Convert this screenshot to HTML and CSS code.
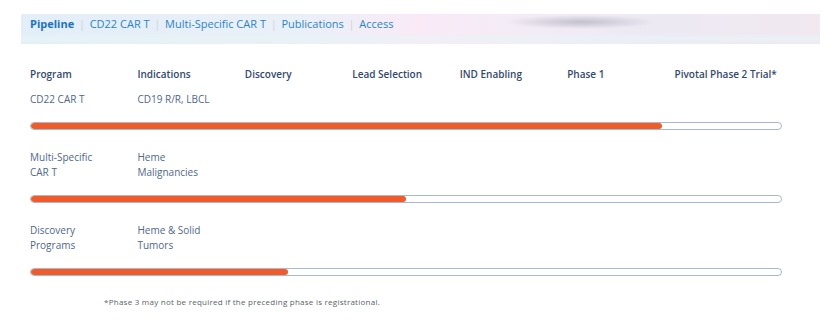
FILE: index.html
```html
<html>
<head>
	<link rel="stylesheet" href="styles.css">
</head>
<body>
	<nav class="tabs">
		<a class="active">Pipeline</a>
		<span class="sep">|</span>
		<a>CD22 CAR T</a>
		<span class="sep">|</span>
		<a>Multi-Specific CAR T</a>
		<span class="sep">|</span>
		<a>Publications</a>
		<span class="sep">|</span>
		<a>Access</a>
	</nav>

	<div class="pipeline">
		<div class="row head">
			<div>Program</div>
			<div>Indications</div>
			<div>Discovery</div>
			<div>Lead Selection</div>
			<div>IND Enabling</div>
			<div>Phase 1</div>
			<div>Pivotal Phase 2 Trial*</div>
		</div>

		<div class="row">
			<div>CD22 CAR T</div>
			<div>CD19 R/R, LBCL</div>
		</div>
		<div class="bar"><div class="fill" style="width:84.2%"></div></div>

		<div class="row">
			<div>Multi-Specific<br>CAR T</div>
			<div>Heme<br>Malignancies</div>
		</div>
		<div class="bar"><div class="fill" style="width:50%"></div></div>

		<div class="row">
			<div>Discovery<br>Programs</div>
			<div>Heme &amp; Solid<br>Tumors</div>
		</div>
		<div class="bar"><div class="fill" style="width:34.3%"></div></div>

		<p class="note">*Phase 3 may not be required if the preceding phase is registrational.</p>
	</div>
</body>
</html>
```

FILE: styles.css
```css
body {
	margin: 0;
	background: #fff;
	font-family: "Open Sans", "DejaVu Sans", sans-serif;
}

.tabs {
	margin: 14px 7px 0 21px;
	height: 30px;
	box-sizing: border-box;
	padding: 2px 0 0 9px;
	display: flex;
	align-items: flex-start;
	gap: 5px;
	font-size: 11px;
	line-height: 16px;
	color: #2b84c6;
	background:
		radial-gradient(ellipse 75px 7px at 560px 8px, rgba(150,150,165,0.5), rgba(150,150,165,0) 100%),
		linear-gradient(180deg, rgba(255,255,255,0) 65%, rgba(232,244,246,0.8) 82%, rgba(255,255,255,0) 100%),
		linear-gradient(90deg, #e2eef8 0%, #eaf0f8 35%, #f9eaf6 50%, #f3ecf6 62%, #ece9f3 80%, #f1e8f0 100%);
}
.tabs a.active {
	font-weight: 700;
	color: #1c74ba;
}
.tabs .sep {
	color: #c5cfda;
	font-size: 10px;
}

.pipeline {
	width: 752px;
	margin: 23px 0 0 30px;
}

.row {
	display: grid;
	grid-template-columns: repeat(7, 1fr);
	font-size: 10px;
	line-height: 15px;
	color: #4f6789;
}
.row.head {
	font-weight: 600;
	color: #34496a;
	margin-bottom: 10px;
}

.bar {
	height: 6px;
	border: 1px solid #a9b9cc;
	border-radius: 4px;
	margin: 15px 0 20px;
	overflow: hidden;
}
.bar .fill {
	height: 100%;
	background: #f15a29;
	border-radius: 4px;
}

.note {
	margin: 18px 0 0 74px;
	font-size: 8px;
	letter-spacing: 0.25px;
	color: #5a5f66;
}
```
